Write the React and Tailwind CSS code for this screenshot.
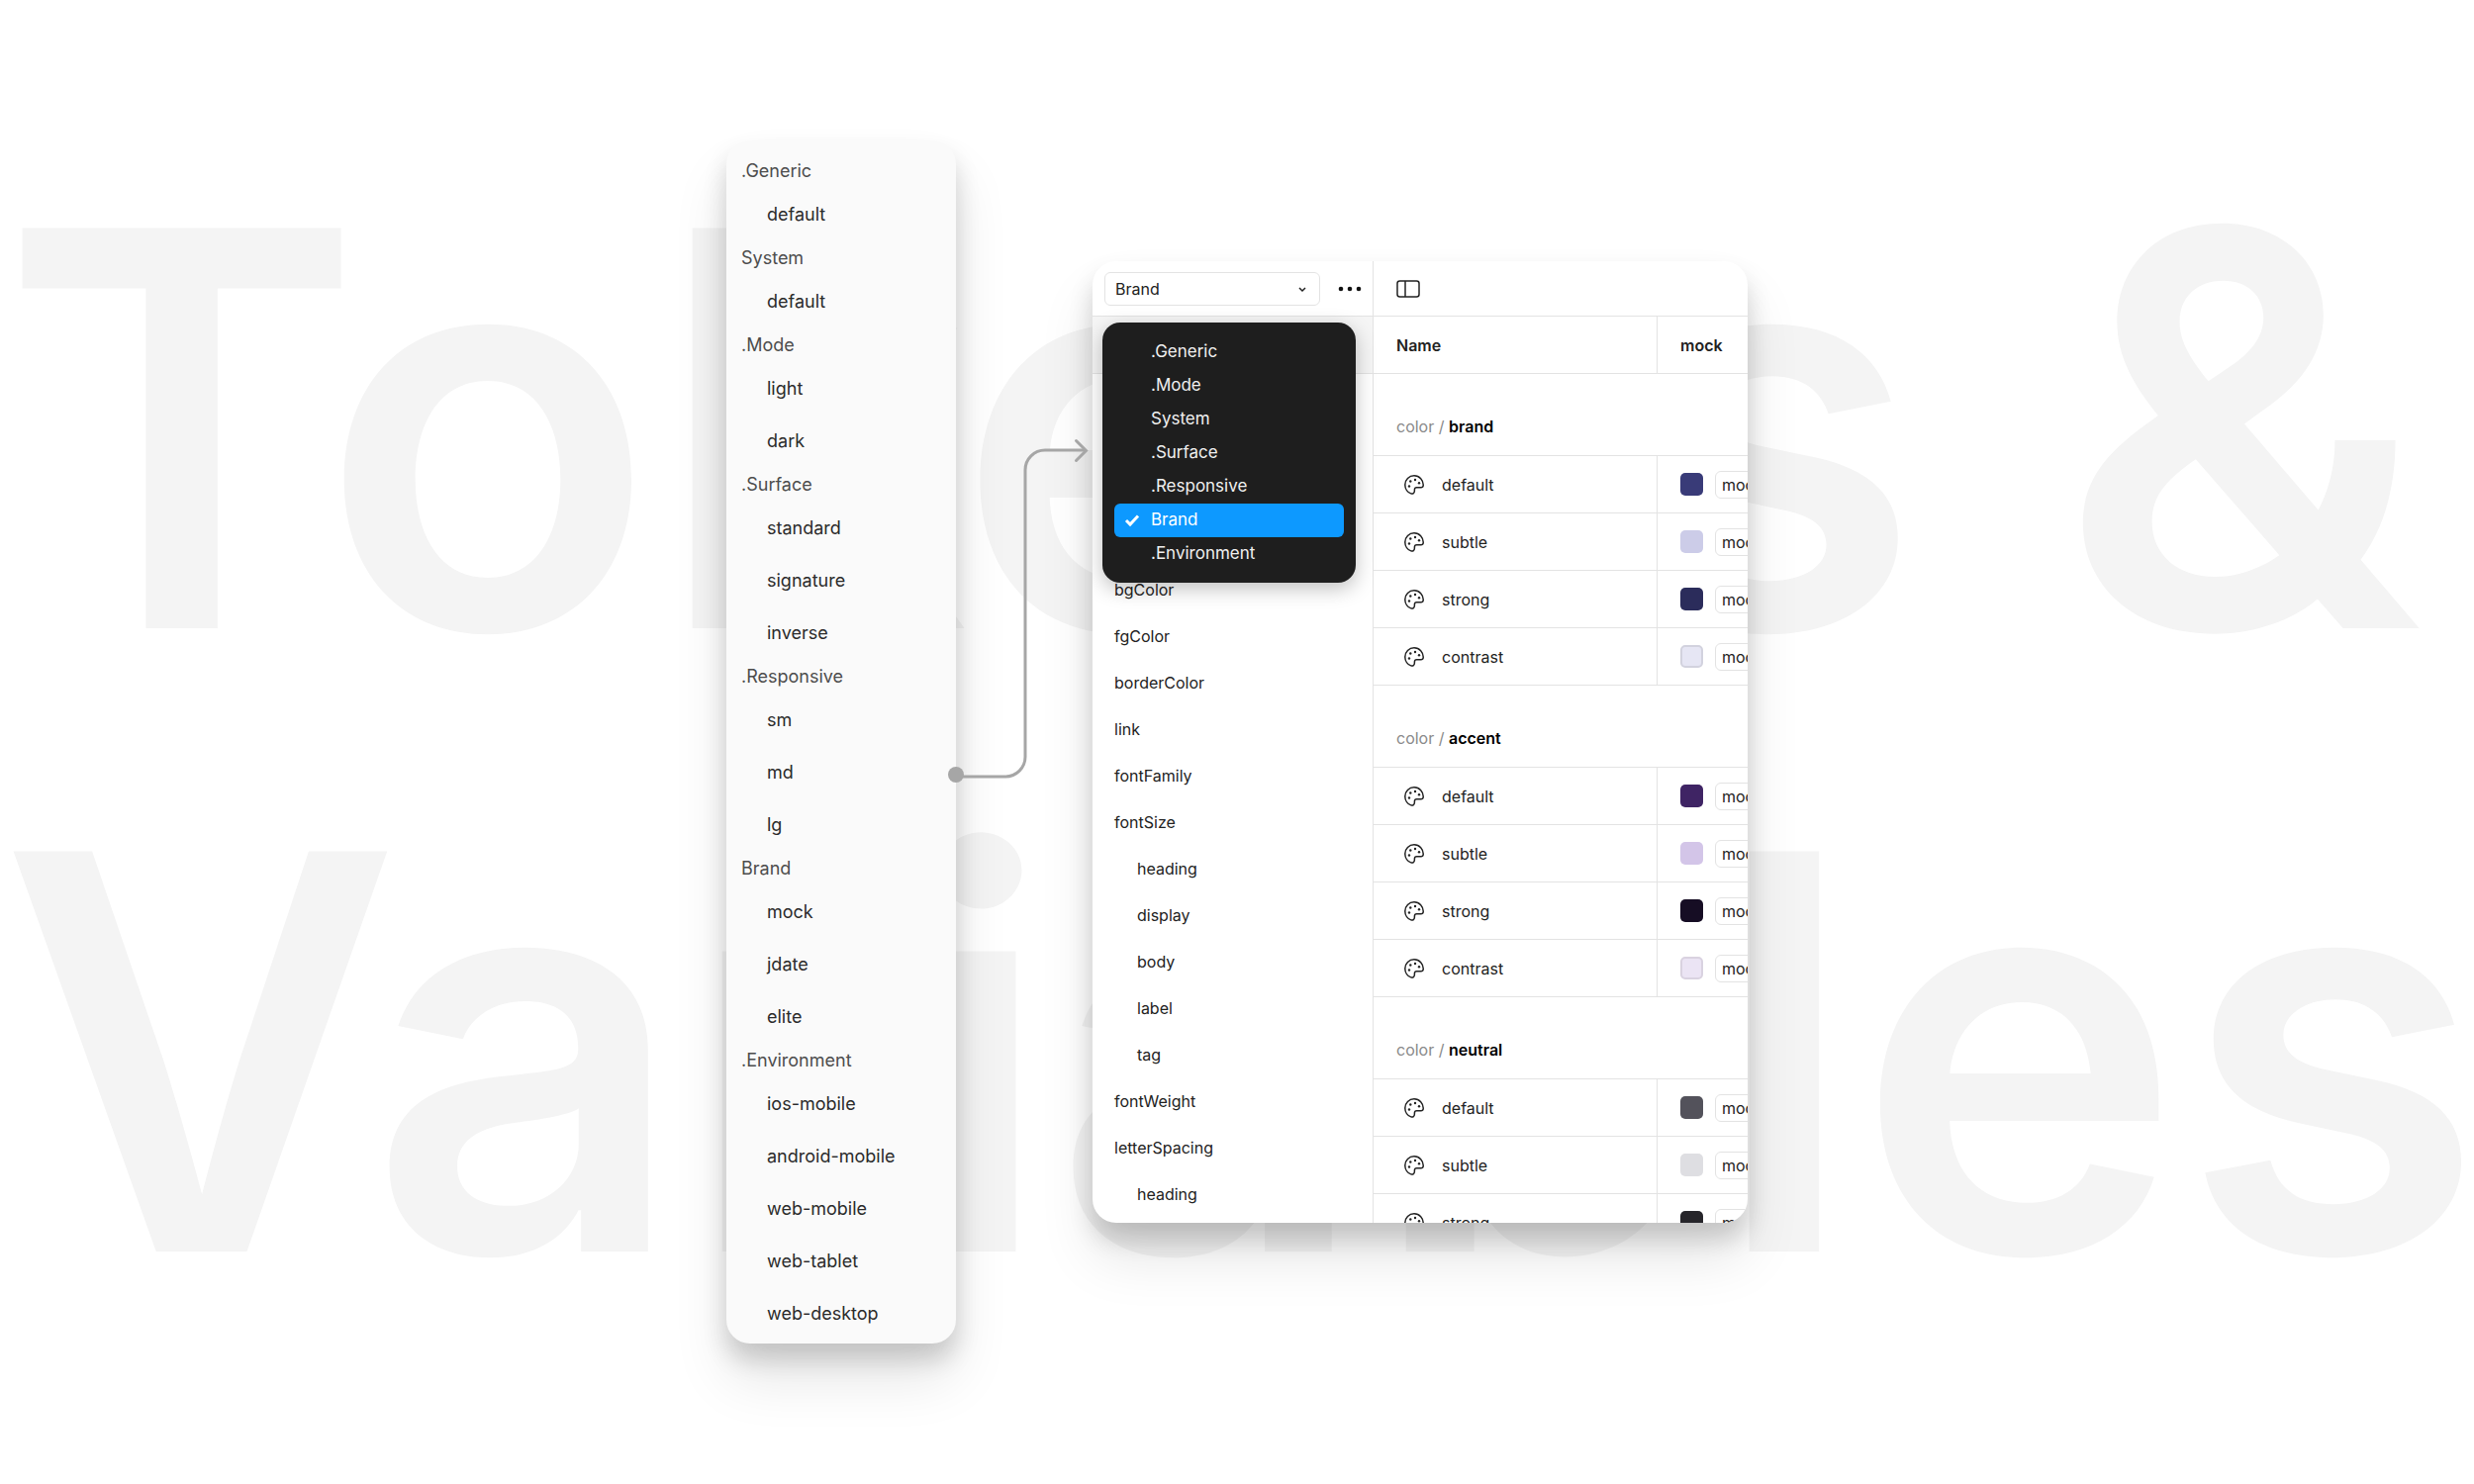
const collections = [
  { name: '.Generic', modes: ['default'] },
  { name: 'System', modes: ['default'] },
  { name: '.Mode', modes: ['light', 'dark'] },
  { name: '.Surface', modes: ['standard', 'signature', 'inverse'] },
  { name: '.Responsive', modes: ['sm', 'md', 'lg'] },
  { name: 'Brand', modes: ['mock', 'jdate', 'elite'] },
  { name: '.Environment', modes: ['ios-mobile', 'android-mobile', 'web-mobile', 'web-tablet', 'web-desktop'] },
]

const menuItems = ['.Generic', '.Mode', 'System', '.Surface', '.Responsive', 'Brand', '.Environment']

const groups = [
  { label: 'bgColor' },
  { label: 'fgColor' },
  { label: 'borderColor' },
  { label: 'link' },
  { label: 'fontFamily' },
  { label: 'fontSize' },
  { label: 'heading', nested: true },
  { label: 'display', nested: true },
  { label: 'body', nested: true },
  { label: 'label', nested: true },
  { label: 'tag', nested: true },
  { label: 'fontWeight' },
  { label: 'letterSpacing' },
  { label: 'heading', nested: true },
]

const sections = [
  {
    name: 'brand',
    rows: [
      { name: 'default', swatch: 'bg-[#393b78]' },
      { name: 'subtle', swatch: 'bg-[#cccce8]' },
      { name: 'strong', swatch: 'bg-[#2b2c5b]' },
      { name: 'contrast', swatch: 'bg-[#e6e6f4] border-2 border-[#d2d2de]' },
    ],
  },
  {
    name: 'accent',
    rows: [
      { name: 'default', swatch: 'bg-[#3f2464]' },
      { name: 'subtle', swatch: 'bg-[#d3c5e8]' },
      { name: 'strong', swatch: 'bg-[#160d24]' },
      { name: 'contrast', swatch: 'bg-[#ebe4f4] border-2 border-[#d9d2e0]' },
    ],
  },
  {
    name: 'neutral',
    rows: [
      { name: 'default', swatch: 'bg-[#53525b]' },
      { name: 'subtle', swatch: 'bg-[#dedee2]' },
      { name: 'strong', swatch: 'bg-[#26252a]' },
    ],
  },
]

function PaletteIcon() {
  return (
    <svg viewBox="0 0 20 20" className="size-5 text-[#222]" fill="none" aria-hidden="true">
      <path
        d="M10 .8C4.900.8.8 4.900.8 10c0 4.200 2.600 7.800 6 8.900 2 .6 3.600-.7 3.600-2.600v-1.300c0-1.300 1-2.200 2.200-2.200h4.300c1.200 0 2.200-.9 2.300-2.100C19.500 5.200 15.300.8 10 .8z"
        stroke="currentColor"
        strokeWidth="1.500"
      />
      <circle cx="11" cy="5" r="1.200" fill="currentColor" />
      <circle cx="6.300" cy="6.500" r="1.200" fill="currentColor" />
      <circle cx="5" cy="11.500" r="1.200" fill="currentColor" />
      <circle cx="15" cy="8.300" r="1.200" fill="currentColor" />
    </svg>
  )
}

function Connector() {
  return (
    <svg
      viewBox="0 0 138 360"
      className="relative z-10 mb-[260px] h-[360px] w-[138px] shrink-0 overflow-visible"
      fill="none"
      stroke="#a6a6a6"
      strokeWidth="3"
      aria-hidden="true"
    >
      <circle cx="0" cy="343" r="8" fill="#a6a6a6" stroke="none" />
      <path d="M4 345H50C61 345 70 336 70 325V35C70 24 79 15 90 15H131" />
      <path d="M121.500 5.500L131.500 15.500L121.500 25.500" strokeLinecap="round" />
    </svg>
  )
}

function ModeList() {
  return (
    <section className="w-[232px] shrink-0 rounded-3xl bg-[#fafafa] pt-[13px] pb-1 text-lg shadow-[0_36px_56px_rgba(0,0,0,0.10),0_16px_24px_rgba(0,0,0,0.16)]">
      {collections.map((collection) => (
        <div key={collection.name}>
          <h2 className="flex h-[35px] items-center px-[15px] text-[#4d4d4d]">{collection.name}</h2>
          <ul>
            {collection.modes.map((mode) => (
              <li key={mode} className="flex h-[53px] items-center pl-[41px] text-[#2b2b2b]">
                {mode}
              </li>
            ))}
          </ul>
        </div>
      ))}
    </section>
  )
}

function CollectionMenu() {
  return (
    <ul className="absolute top-[62px] left-[10px] z-10 w-[256px] rounded-[18px] bg-[#1e1e1e] px-3 pt-[13px] pb-3 text-[17px] text-[#f0f0f0] shadow-[0_6px_20px_rgba(0,0,0,0.25)]">
      {menuItems.map((item) => {
        const selected = item === 'Brand'
        return (
          <li key={item}>
            <button
              type="button"
              className={`flex h-[34px] w-full items-center rounded-md pl-[10px] text-left ${selected ? 'bg-[#0d99ff] text-white' : ''}`}
            >
              <span className="w-[27px]">
                {selected && (
                  <svg viewBox="0 0 16 14" className="h-[14px] w-4" fill="none" aria-hidden="true">
                    <path d="M2 7L6 11L14 2.500" stroke="currentColor" strokeWidth="3" />
                  </svg>
                )}
              </span>
              {item}
            </button>
          </li>
        )
      })}
    </ul>
  )
}

function Sidebar() {
  return (
    <aside className="relative w-[284px] shrink-0 border-r border-[#e3e3e3]">
      <div className="flex h-14 items-center border-b border-[#e3e3e3] pl-3">
        <div className="relative">
          <select
            aria-label="Collection"
            className="h-[34px] w-[218px] appearance-none rounded-md border border-[#e3e3e3] bg-white pl-[10px] text-base text-[#222]"
          >
            <option>Brand</option>
          </select>
          <svg viewBox="0 0 8 6" className="pointer-events-none absolute top-[15px] right-[14px] h-[6px] w-2" fill="none" aria-hidden="true">
            <path d="M1 1L4 4L7 1" stroke="#222" strokeWidth="1.500" />
          </svg>
        </div>
        <button type="button" aria-label="More options" className="ml-[18px]">
          <svg viewBox="0 0 24 6" className="h-[6px] w-6" fill="#111" aria-hidden="true">
            <circle cx="3" cy="3" r="2.300" />
            <circle cx="12" cy="3" r="2.300" />
            <circle cx="21" cy="3" r="2.300" />
          </svg>
        </button>
      </div>
      <div className="h-[58px] border-b border-[#e3e3e3] bg-[#f5f5f5]"></div>
      <ul className="pt-[194px] text-base text-[#222]">
        {groups.map(({ label, nested }, i) => (
          <li key={i} className={`flex h-[47px] items-center ${nested ? 'pl-[45px]' : 'pl-[22px]'}`}>
            {label}
          </li>
        ))}
      </ul>
      <CollectionMenu />
    </aside>
  )
}

function VariablesTable() {
  return (
    <div className="min-w-0 flex-1 overflow-hidden">
      <div className="flex h-14 items-center border-b border-[#e3e3e3] pl-[23px]">
        <button type="button" aria-label="Toggle sidebar">
          <svg viewBox="0 0 24 18" className="h-[18px] w-6" fill="none" stroke="#222" strokeWidth="1.500" aria-hidden="true">
            <rect x="1" y="1" width="22" height="16" rx="2.500" />
            <path d="M9 1V17" />
          </svg>
        </button>
      </div>
      <table className="w-[488px] table-fixed border-separate border-spacing-0 text-left text-base text-[#222]">
        <thead>
          <tr className="h-[58px]">
            <th className="w-[287px] border-r border-b border-[#e3e3e3] pl-[23px] font-semibold">Name</th>
            <th className="border-b border-[#e3e3e3] pl-[23px] font-semibold">mock</th>
          </tr>
        </thead>
        {sections.map((section) => (
          <tbody key={section.name}>
            <tr className="h-[83px]">
              <th colSpan={2} className="border-b border-[#e3e3e3] pt-[23px] pl-[23px] font-normal text-[#8a8a8a]">
                color / <span className="font-semibold text-black">{section.name}</span>
              </th>
            </tr>
            {section.rows.map((row) => (
              <tr key={row.name} className="h-[58px]">
                <td className="border-r border-b border-[#e3e3e3]">
                  <div className="flex items-center gap-[18px] pl-[31px]">
                    <PaletteIcon />
                    {row.name}
                  </div>
                </td>
                <td className="border-b border-[#e3e3e3]">
                  <div className="flex items-center gap-3 pl-[23px]">
                    <span className={`size-[23px] rounded-[5px] ${row.swatch}`}></span>
                    <span className="flex h-7 items-center rounded-md border border-[#e3e3e3] px-[6px]">mock</span>
                  </div>
                </td>
              </tr>
            ))}
          </tbody>
        ))}
      </table>
    </div>
  )
}

export default function App() {
  return (
    <main className="grid min-h-screen grid-cols-1 overflow-hidden bg-white font-['Inter',sans-serif]">
      <h1 className="[grid-area:1/1] pt-[118px] text-[556px] leading-[630px] font-semibold whitespace-nowrap text-[#f4f4f4]">
        Tokens &amp;
        <br />
        Variables
      </h1>
      <div className="[grid-area:1/1] flex items-center justify-center">
        <ModeList />
        <Connector />
        <section className="flex h-[972px] w-[662px] shrink-0 rounded-3xl bg-white shadow-[0_36px_56px_rgba(0,0,0,0.10),0_16px_24px_rgba(0,0,0,0.16)]">
          <div className="flex w-full overflow-hidden rounded-3xl">
            <Sidebar />
            <VariablesTable />
          </div>
        </section>
      </div>
    </main>
  )
}
